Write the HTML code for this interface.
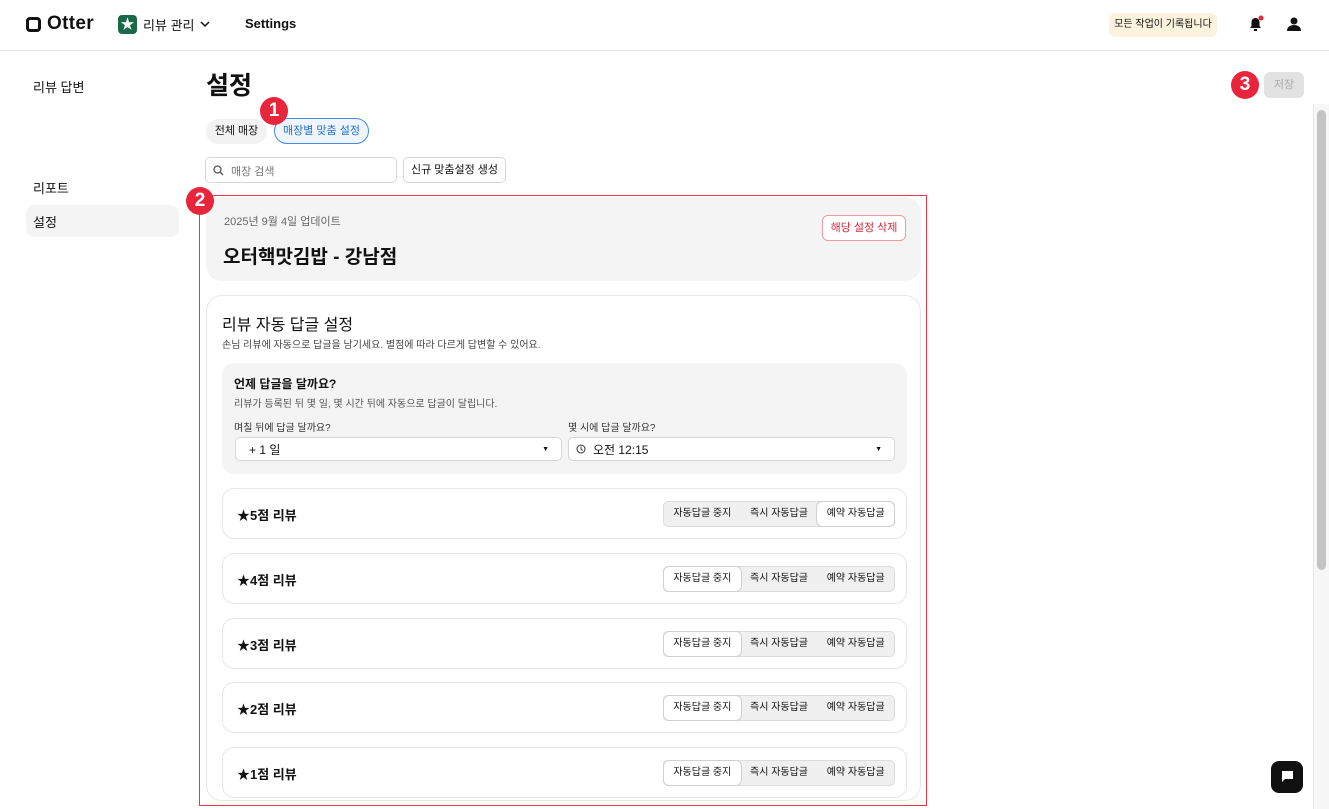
<!DOCTYPE html>
<html><head><meta charset="utf-8"><style>
*{box-sizing:border-box;margin:0;padding:0}
body{width:1329px;height:809px;overflow:hidden;background:#fff;font-family:"Liberation Sans","Noto Sans CJK KR",sans-serif;color:#111;position:relative}
.a{position:absolute}
.badge{position:absolute;width:28px;height:28px;border-radius:50%;background:#e8253a;color:#fff;font-weight:bold;font-size:19px;text-align:center;line-height:28px}
.row{position:absolute;left:222px;width:685px;height:51px;border:1px solid #e6e6e6;border-radius:12px}
.row .t{position:absolute;left:14px;top:16px;font-size:13px;font-weight:bold}
.seg{position:absolute;left:440px;top:12px;width:232px;height:26px;background:#f0f0f0;border:1px solid #dcdcdc;border-radius:5px;display:flex;font-size:10px}
.seg div{flex:1;text-align:center;line-height:24px;border-radius:5px}
.seg .on{background:#fff;box-shadow:0 0 0 1px #d0d0d0}
.sel{position:absolute;top:437px;height:24px;border:1px solid #d6d6d6;border-radius:5px;background:#fff;font-size:12px;line-height:24px}
</style></head><body>
<div class="a" style="left:0;top:0;width:1329px;height:51px;border-bottom:1px solid #e6e6e6"></div>
<div class="a" style="left:26px;top:17px;width:15px;height:15px;border:3px solid #111;border-radius:4px"></div>
<div class="a" style="left:47px;top:13px;font-size:19px;font-weight:bold;letter-spacing:0.3px">Otter</div>
<div class="a" style="left:118px;top:15px;width:19px;height:19px;background:#1a6a4a;border-radius:4px;color:#fff;font-size:14px;text-align:center;line-height:19px">★</div>
<div class="a" style="left:143px;top:15px;font-size:13px">리뷰 관리</div>
<svg class="a" style="left:200px;top:20px" width="10" height="8"><path d="M1 2l4 4 4-4" stroke="#111" stroke-width="1.5" fill="none"/></svg>
<div class="a" style="left:245px;top:16px;font-size:13px;font-weight:bold">Settings</div>
<div class="a" style="left:1109px;top:13px;width:108px;height:24px;background:#fbf3dd;border-radius:6px;font-size:10px;text-align:center;line-height:24px">모든 작업이 기록됩니다</div>
<svg class="a" style="left:1247px;top:15px" width="18" height="18"><path d="M3 13h11l-1.5-2V7a4 4 0 0 0-8 0v4z" fill="#111"/><rect x="7" y="14" width="3" height="2" fill="#111"/><circle cx="14" cy="3" r="2.5" fill="#e8253a"/></svg>
<svg class="a" style="left:1286px;top:16px" width="16" height="16"><circle cx="8" cy="5" r="3.5" fill="#111"/><path d="M1 15c0-4 3-6 7-6s7 2 7 6z" fill="#111"/></svg>
<div class="a" style="left:33px;top:77px;font-size:13px">리뷰 답변</div>
<div class="a" style="left:33px;top:178px;font-size:13px">리포트</div>
<div class="a" style="left:26px;top:205px;width:153px;height:32px;background:#f4f4f4;border-radius:8px"></div>
<div class="a" style="left:33px;top:212px;font-size:13px">설정</div>
<div class="a" style="left:206px;top:66px;font-size:25px;font-weight:bold">설정</div>
<div class="a" style="left:206px;top:119px;width:61px;height:25px;background:#f2f2f2;border-radius:13px;font-size:11px;text-align:center;line-height:25px">전체 매장</div>
<div class="a" style="left:274px;top:118px;width:95px;height:26px;background:#eef5ff;border:1px solid #4a8ae0;border-radius:13px;font-size:11px;color:#2a6fd0;text-align:center;line-height:24px">매장별 맞춤 설정</div>
<div class="a" style="left:205px;top:157px;width:192px;height:26px;border:1px solid #d6d6d6;border-radius:5px"></div>
<svg class="a" style="left:213px;top:165px" width="11" height="11"><circle cx="4.5" cy="4.5" r="3.5" stroke="#555" stroke-width="1.3" fill="none"/><path d="M7 7l3 3" stroke="#555" stroke-width="1.3"/></svg>
<div class="a" style="left:231px;top:163px;font-size:11px;color:#777">매장 검색</div>
<div class="a" style="left:403px;top:157px;width:103px;height:26px;border:1px solid #d6d6d6;border-radius:5px;font-size:11px;text-align:center;line-height:24px">신규 맞춤설정 생성</div>
<div class="a" style="left:1264px;top:72px;width:40px;height:26px;background:#e2e2e2;border-radius:6px;font-size:11px;color:#aaa;text-align:center;line-height:26px">저장</div>
<div class="a" style="left:199px;top:195px;width:728px;height:611px;border:1px solid #e8374a"></div>
<div class="a" style="left:206px;top:197px;width:715px;height:84px;background:#f4f4f4;border-radius:16px"></div>
<div class="a" style="left:224px;top:213px;font-size:11px;color:#666">2025년 9월 4일 업데이트</div>
<div class="a" style="left:223px;top:242px;font-size:19px;font-weight:bold">오터핵맛김밥 - 강남점</div>
<div class="a" style="left:822px;top:215px;width:84px;height:26px;border:1px solid #ee9aa4;border-radius:6px;background:#fff;font-size:11px;color:#d8283a;text-align:center;line-height:24px">해당 설정 삭제</div>
<div class="a" style="left:206px;top:295px;width:715px;height:506px;border:1px solid #e6e6e6;border-radius:16px"></div>
<div class="a" style="left:222px;top:311px;font-size:16px">리뷰 자동 답글 설정</div>
<div class="a" style="left:222px;top:336px;font-size:10px;color:#444">손님 리뷰에 자동으로 답글을 남기세요. 별점에 따라 다르게 답변할 수 있어요.</div>
<div class="a" style="left:222px;top:363px;width:685px;height:111px;background:#f4f4f4;border-radius:12px"></div>
<div class="a" style="left:234px;top:375px;font-size:12px;font-weight:bold">언제 답글을 달까요?</div>
<div class="a" style="left:234px;top:395px;font-size:10px;color:#555">리뷰가 등록된 뒤 몇 일, 몇 시간 뒤에 자동으로 답글이 달립니다.</div>
<div class="a" style="left:234px;top:419px;font-size:10px;color:#333">며칠 뒤에 답글 달까요?</div>
<div class="a" style="left:568px;top:419px;font-size:10px;color:#333">몇 시에 답글 달까요?</div>
<div class="sel" style="left:235px;width:327px;padding-left:13px">+ 1 일<span style="position:absolute;right:12px;font-size:7px">▼</span></div>
<div class="sel" style="left:568px;width:327px;padding-left:24px"><svg style="position:absolute;left:7px;top:6px" width="10" height="10"><circle cx="5" cy="5" r="4" stroke="#333" fill="none"/><path d="M5 2.5V5l1.5 1.5" stroke="#333" fill="none"/></svg>오전 12:15<span style="position:absolute;right:12px;font-size:7px">▼</span></div>
<div class="row" style="top:488px"><div class="t">★5점 리뷰</div><div class="seg"><div>자동답글 중지</div><div>즉시 자동답글</div><div class="on">예약 자동답글</div></div></div>
<div class="row" style="top:553px"><div class="t">★4점 리뷰</div><div class="seg"><div class="on">자동답글 중지</div><div>즉시 자동답글</div><div>예약 자동답글</div></div></div>
<div class="row" style="top:618px"><div class="t">★3점 리뷰</div><div class="seg"><div class="on">자동답글 중지</div><div>즉시 자동답글</div><div>예약 자동답글</div></div></div>
<div class="row" style="top:682px"><div class="t">★2점 리뷰</div><div class="seg"><div class="on">자동답글 중지</div><div>즉시 자동답글</div><div>예약 자동답글</div></div></div>
<div class="row" style="top:747px"><div class="t">★1점 리뷰</div><div class="seg"><div class="on">자동답글 중지</div><div>즉시 자동답글</div><div>예약 자동답글</div></div></div>
<div class="badge" style="left:260px;top:97px">1</div>
<div class="badge" style="left:186px;top:187px">2</div>
<div class="badge" style="left:1231px;top:71px">3</div>
<div class="a" style="left:1313px;top:104px;width:16px;height:705px;background:#f7f7f7;border-left:1px solid #e6e6e6"></div>
<div class="a" style="left:1317px;top:110px;width:9px;height:460px;background:#c4c4c4;border-radius:5px"></div>
<div class="a" style="left:1271px;top:761px;width:32px;height:32px;background:#111;border-radius:8px"></div>
<svg class="a" style="left:1281px;top:770px" width="13" height="13"><path d="M1 1h11v8H4l-3 3z" fill="#fff"/></svg>
</body></html>
